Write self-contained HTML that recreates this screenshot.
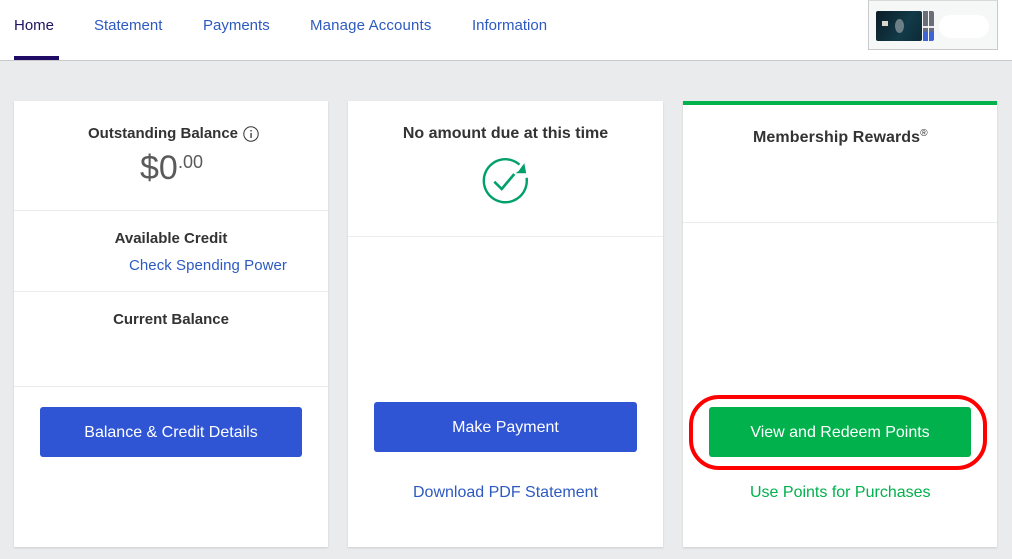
<!DOCTYPE html>
<html><head><meta charset="utf-8"><style>
*{box-sizing:border-box}
html,body{margin:0;padding:0}
body{width:1012px;height:559px;overflow:hidden;background:#e9ebec;font-family:"Liberation Sans",sans-serif;position:relative;color:#333}
.a{position:absolute;white-space:nowrap}
.nav{left:0;top:0;width:1012px;height:61px;background:#fff;border-bottom:1px solid #c8c9ca}
.n{top:17px;font-size:15px;line-height:18px;color:#2d5ac0}
.card{background:#fff;box-shadow:0 1px 2px rgba(0,0,0,.13);top:101px;height:446px}
.hr{height:1px;background:#ebecec}
.t{font-size:15px;line-height:18px;font-weight:bold;color:#333;text-align:center}
.l{font-size:16px;line-height:20px;text-align:center}
.b{border-radius:3px;color:#fff;font-size:16px;text-align:center;height:50px;line-height:52px}
</style></head><body>
<div class="a nav"></div>
<div class="a n" style="left:14px;color:#1f1360">Home</div>
<div class="a" style="left:14px;top:56px;width:45px;height:4px;background:#1f0a66"></div>
<div class="a n" style="left:94px">Statement</div>
<div class="a n" style="left:203px">Payments</div>
<div class="a n" style="left:310px;letter-spacing:.15px">Manage Accounts</div>
<div class="a n" style="left:472px">Information</div>
<div class="a" style="left:868px;top:0;width:130px;height:50px;background:#f6f7f7;border:1px solid #c8c9ca;border-top:1px solid #d8d9da"></div>
<div class="a" style="left:876px;top:11px;width:46px;height:30px;border-radius:2px;background:linear-gradient(120deg,#0b1c26,#123a48 60%,#0d2a36)"></div>
<div class="a" style="left:882px;top:21px;width:6px;height:5px;background:#d8d8d0"></div>
<div class="a" style="left:895px;top:19px;width:9px;height:14px;border-radius:50%;background:#6d7f86"></div>
<div class="a" style="left:923px;top:11px;width:5px;height:30px;background:linear-gradient(#6a6e78 0,#6a6e78 50%,#e8e8ee 50%,#e8e8ee 56%,#6a6e78 56%,#6a6e78 68%,#3c63d8 68%,#3c63d8 100%)"></div>
<div class="a" style="left:929px;top:11px;width:5px;height:30px;border-radius:0 2px 2px 0;background:linear-gradient(#6a6e78 0,#6a6e78 50%,#e8e8ee 50%,#e8e8ee 56%,#6a6e78 56%,#6a6e78 68%,#3c63d8 68%,#3c63d8 100%)"></div>
<div class="a" style="left:939px;top:15px;width:50px;height:23px;border-radius:12px;background:#fff"></div>

<div class="a card" style="left:14px;width:314px"></div>
<div class="a t" style="left:88px;top:125px">Outstanding Balance</div>
<svg class="a" style="left:243px;top:126px" width="16" height="16" viewBox="0 0 16 16"><circle cx="8" cy="8" r="7.2" fill="none" stroke="#333" stroke-width="1"/><rect x="7.4" y="7" width="1.3" height="5" fill="#333"/><rect x="7.4" y="4" width="1.3" height="1.5" fill="#333"/></svg>
<div class="a" style="left:140px;top:148px;font-size:34px;line-height:40px;color:#5a5a5a">$0</div>
<div class="a" style="left:178px;top:152px;font-size:18px;line-height:20px;color:#5a5a5a">.00</div>
<div class="a hr" style="left:14px;top:210px;width:314px"></div>
<div class="a t" style="left:14px;width:314px;top:230px">Available Credit</div>
<div class="a l" style="left:129px;top:256px;font-size:15px;letter-spacing:.06px;color:#2d5ac0">Check Spending Power</div>
<div class="a hr" style="left:14px;top:291px;width:314px"></div>
<div class="a t" style="left:14px;width:314px;top:311px">Current Balance</div>
<div class="a hr" style="left:14px;top:386px;width:314px"></div>
<div class="a b" style="left:40px;top:407px;width:262px;background:#2f55d4">Balance &amp; Credit Details</div>

<div class="a card" style="left:348px;width:315px"></div>
<div class="a t" style="left:348px;width:315px;top:125px;font-size:16px">No amount due at this time</div>
<svg class="a" style="left:475px;top:150px" width="60" height="60" viewBox="0 0 60 60"><path d="M51.6 27.8A21.5 21.5 0 1 1 44.5 14.6" fill="none" stroke="#00a06a" stroke-width="2.4"/><path d="M49.3 13.2L51.2 23.2 40.6 23.2 44 20.6 46 17.6Z" fill="#00a06a"/><path d="M19.3 31.7L26.7 39 39.3 24" fill="none" stroke="#00a06a" stroke-width="2.6"/></svg>
<div class="a hr" style="left:348px;top:236px;width:315px"></div>
<div class="a b" style="left:374px;top:402px;width:263px;background:#2f55d4">Make Payment</div>
<div class="a l" style="left:348px;width:315px;top:483px;color:#2d5ac0">Download PDF Statement</div>

<div class="a card" style="left:683px;width:314px;border-top:4px solid #00b14c"></div>
<div class="a t" style="left:753px;top:129px;font-size:16px;letter-spacing:.1px">Membership Rewards<sup style="font-size:10px;line-height:0;vertical-align:6px;font-weight:normal">®</sup></div>
<div class="a hr" style="left:683px;top:222px;width:314px"></div>
<div class="a" style="left:689px;top:395px;width:298px;height:75px;border:4px solid #f00;border-radius:30px"></div>
<div class="a b" style="left:709px;top:407px;width:262px;background:#00b14c">View and Redeem Points</div>
<div class="a l" style="left:750px;top:483px;color:#00b14c">Use Points for Purchases</div>
</body></html>
